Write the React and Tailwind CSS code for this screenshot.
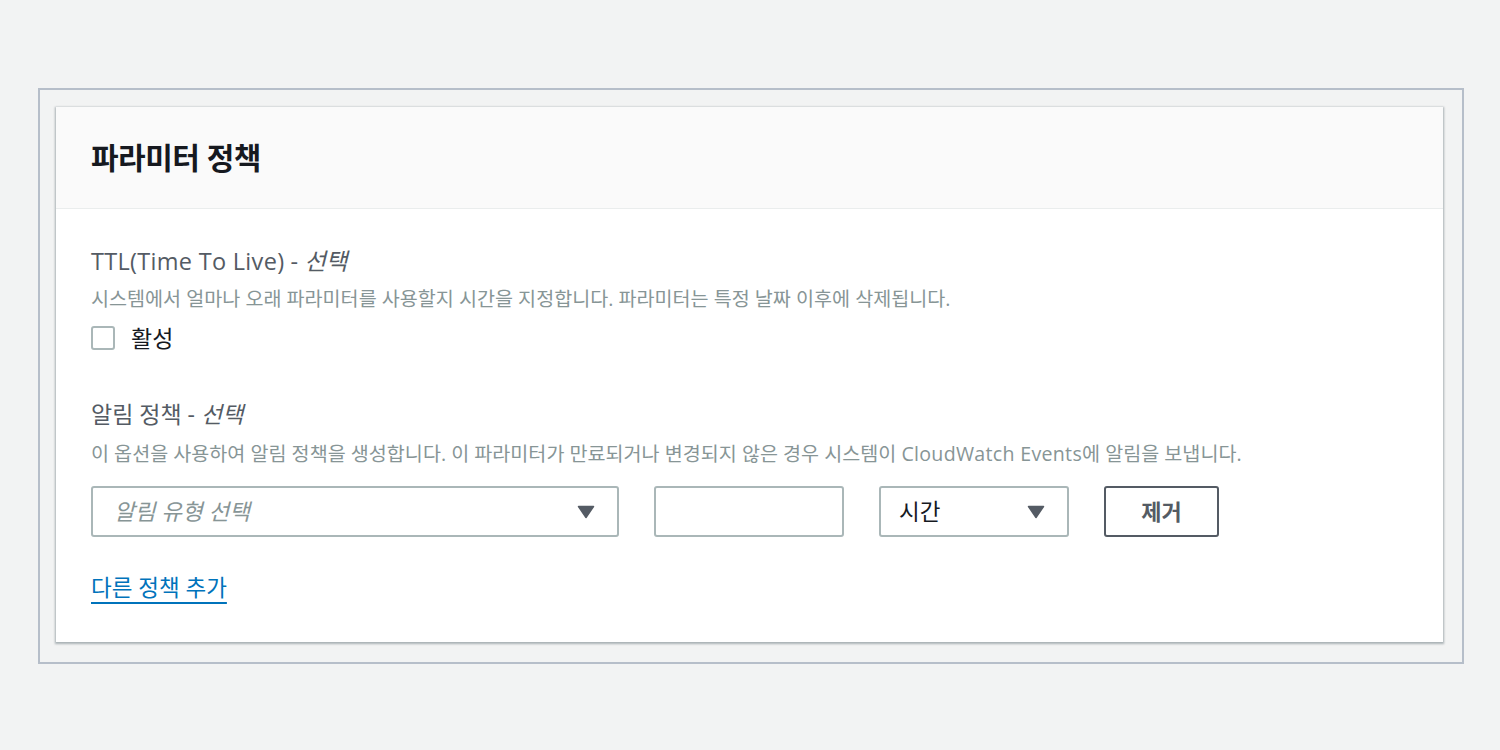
export default function App() {
  const font = { fontFamily: '"Open Sans", "Noto Sans CJK KR", sans-serif' }
  return (
    <div className="w-[1500px] h-[750px] bg-[#f2f3f3] pt-[88px] px-[38px]" style={font}>
      <div className="w-[1426px] h-[576px] border-2 border-[#b6bec9] bg-[#f2f3f3] pt-[17px] px-[16px]">
        <div className="w-[1387px] h-[535px] bg-white shadow-[0_1px_2px_1px_rgba(0,28,36,0.3)]">
          {/* Header */}
          <div className="h-[102px] bg-[#fafafa] border-b border-[#eaeded] flex items-center pl-[35px]">
            <h2 className="text-[30px] font-bold text-[#16191f] tracking-[-0.5px]">파라미터 정책</h2>
          </div>

          {/* Body */}
          <div className="pl-[35px] pt-[36px]">
            <div className="text-[23.5px] text-[#545b64] leading-[32px]">
              <span className="tracking-[0.3px]">TTL(Time To Live)</span> - <i>선택</i>
            </div>
            <div className="mt-[8px] text-[19.6px] text-[#879596] leading-[28px]">
              시스템에서 얼마나 오래 파라미터를 사용할지 시간을 지정합니다. 파라미터는 특정 날짜 이후에 삭제됩니다.
            </div>
            <label className="mt-[10px] flex items-center gap-[16px] h-[30px]">
              <span className="w-[24px] h-[24px] rounded-[3px] border-2 border-[#aab7b8] bg-white" />
              <span className="text-[23px] text-[#16191f]">활성</span>
            </label>

            <div className="mt-[45px] text-[23px] text-[#545b64] leading-[32px]">
              알림 정책 - <i>선택</i>
            </div>
            <div className="mt-[10px] text-[19.6px] text-[#879596] leading-[28px]">
              이 옵션을 사용하여 알림 정책을 생성합니다. 이 파라미터가 만료되거나 변경되지 않은 경우 시스템이 <span className="tracking-[0.3px]">CloudWatch Events</span>에 알림을 보냅니다.
            </div>

            <div className="mt-[18px] flex items-center">
              <div className="w-[528px] h-[51px] border-2 border-[#aab7b8] rounded-[3px] flex items-center justify-between pl-[21px] pr-[22px]">
                <span className="text-[22.5px] italic text-[#879596]">알림 유형 선택</span>
                <Caret />
              </div>
              <div className="ml-[35px] w-[190px] h-[51px] border-2 border-[#aab7b8] rounded-[3px] bg-white" />
              <div className="ml-[35px] w-[190px] h-[51px] border-2 border-[#aab7b8] rounded-[3px] flex items-center justify-between pl-[18px] pr-[22px]">
                <span className="text-[22.5px] text-[#16191f]">시간</span>
                <Caret />
              </div>
              <button className="ml-[35px] w-[115px] h-[51px] border-2 border-[#545b64] rounded-[3px] bg-white text-[22px] font-bold text-[#545b64]">
                제거
              </button>
            </div>

            <a href="#" className="mt-[35px] inline-block text-[22.5px] leading-[32px] text-[#0073bb] underline decoration-2 underline-offset-[6px]">
              다른 정책 추가
            </a>
          </div>
        </div>
      </div>
    </div>
  )
}

function Caret() {
  return (
    <svg width="18" height="14" viewBox="0 0 18 14">
      <path d="M1.5 1.5 L16.5 1.5 L9 12.5 Z" fill="#545b64" stroke="#545b64" strokeWidth="1.5" strokeLinejoin="round" />
    </svg>
  )
}
